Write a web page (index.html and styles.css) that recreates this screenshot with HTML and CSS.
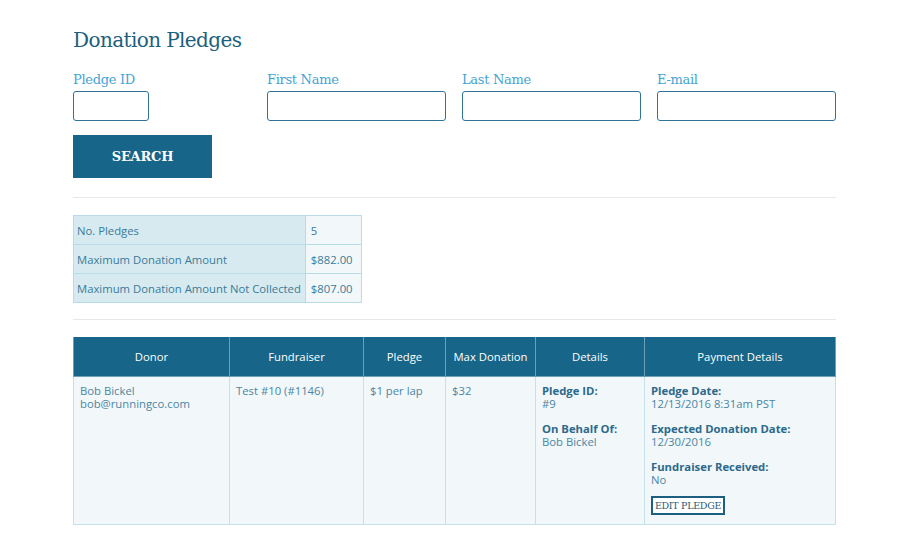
FILE: index.html
```html
<!DOCTYPE html>
<html>
<head lang="en">
    <meta charset="UTF-8">
    <link rel="stylesheet" href="styles.css">
    <title>Donation Pledges</title>
</head>
<body>
<div class="page">
    <h1 class="title">Donation Pledges</h1>

    <form class="search_form">
        <div class="fields">
            <div class="field field_small">
                <label>Pledge ID</label>
                <input type="text">
            </div>
            <div class="field">
                <label>First Name</label>
                <input type="text">
            </div>
            <div class="field">
                <label>Last Name</label>
                <input type="text">
            </div>
            <div class="field">
                <label>E-mail</label>
                <input type="text">
            </div>
        </div>
        <button type="button" class="btn_search">SEARCH</button>
    </form>

    <hr class="sep">

    <table class="summary">
        <tr><th>No. Pledges</th><td>5</td></tr>
        <tr><th>Maximum Donation Amount</th><td>$882.00</td></tr>
        <tr><th>Maximum Donation Amount Not Collected</th><td>$807.00</td></tr>
    </table>

    <hr class="sep sep_table">

    <table class="pledges">
        <thead>
        <tr>
            <th class="c_donor">Donor</th>
            <th class="c_fund">Fundraiser</th>
            <th class="c_pledge">Pledge</th>
            <th class="c_max">Max Donation</th>
            <th class="c_details">Details</th>
            <th class="c_pay">Payment Details</th>
        </tr>
        </thead>
        <tbody>
        <tr>
            <td>Bob Bickel<br>bob@runningco.com</td>
            <td>Test #10 (#1146)</td>
            <td>$1 per lap</td>
            <td>$32</td>
            <td>
                <div class="item"><b>Pledge ID:</b>#9</div>
                <div class="item"><b>On Behalf Of:</b>Bob Bickel</div>
            </td>
            <td>
                <div class="item"><b>Pledge Date:</b>12/13/2016 8:31am PST</div>
                <div class="item"><b>Expected Donation Date:</b>12/30/2016</div>
                <div class="item"><b>Fundraiser Received:</b>No</div>
                <button type="button" class="btn_edit">EDIT PLEDGE</button>
            </td>
        </tr>
        </tbody>
    </table>
</div>
</body>
</html>
```

FILE: styles.css
```css
* {
    padding: 0;
    margin: 0;
    box-sizing: border-box;
}

body {
    background: #fff;
    font-family: "Open Sans", "Liberation Sans", sans-serif;
}

.page {
    width: 763px;
    margin-left: 73px;
    padding-top: 27px;
}

.title {
    font-family: "DejaVu Serif", serif;
    font-weight: normal;
    font-size: 20px;
    line-height: 26px;
    color: #1d5f7e;
    letter-spacing: -0.6px;
}

.search_form {
    margin-top: 18px;
}

.fields {
    display: grid;
    grid-template-columns: 178px 179px 179px 179px;
    column-gap: 16px;
}

.field label {
    display: block;
    font-family: "DejaVu Serif", serif;
    font-size: 13px;
    line-height: 18px;
    color: #45a3d3;
    letter-spacing: -0.3px;
    margin-bottom: 2px;
}

.field input {
    display: block;
    width: 179px;
    height: 30px;
    border: 1px solid #2f7396;
    border-radius: 3px;
    background: #fff;
}

.field_small input {
    width: 76px;
}

.btn_search {
    display: block;
    margin-top: 14px;
    width: 139px;
    height: 43px;
    border: none;
    background: #176588;
    color: #fff;
    font-family: "DejaVu Serif", serif;
    font-weight: bold;
    font-size: 13px;
    letter-spacing: -0.2px;
}

.sep {
    border: none;
    border-top: 1px solid #e8e8e8;
    margin: 19px 0 17px;
}

.sep_table {
    margin: 16px 0 17px;
}

.summary {
    border-collapse: collapse;
    border: 1px solid #b8dbe8;
    font-size: 11.3px;
    color: #3a7b9a;
}

.summary th,
.summary td {
    height: 29px;
    padding: 0 4px 0 3px;
    border: 1px solid #b8dbe8;
    text-align: left;
    font-weight: normal;
    white-space: nowrap;
}

.summary th {
    background: #d6eaf0;
}

.summary td {
    background: #f2f7fa;
    padding-left: 5px;
    width: 56px;
}

.pledges {
    width: 763px;
    border-collapse: collapse;
    font-size: 11.3px;
    color: #4a86a3;
    margin-bottom: 30px;
}

.pledges th {
    height: 39px;
    background: #176588;
    color: #fff;
    font-weight: normal;
    border: 1px solid #6f9fb6;
    border-top: none;
}

.pledges td {
    vertical-align: top;
    background: #f2f7fa;
    border: 1px solid #c6e1ec;
    height: 148px;
    padding: 7px 6px 8px;
    line-height: 13px;
}

.c_donor { width: 156px; }
.c_fund { width: 134px; }
.c_pledge { width: 82px; }
.c_max { width: 90px; }
.c_details { width: 109px; }

.item {
    margin-bottom: 12px;
}

.item b {
    display: block;
    color: #2c6a8b;
    font-weight: bold;
}

.btn_edit {
    display: block;
    margin-top: -2px;
    width: 74px;
    height: 19px;
    border: 2px solid #1d5f7e;
    background: #fff;
    color: #2c5a72;
    font-family: "DejaVu Serif", serif;
    font-size: 9.5px;
    letter-spacing: -0.3px;
}
```
